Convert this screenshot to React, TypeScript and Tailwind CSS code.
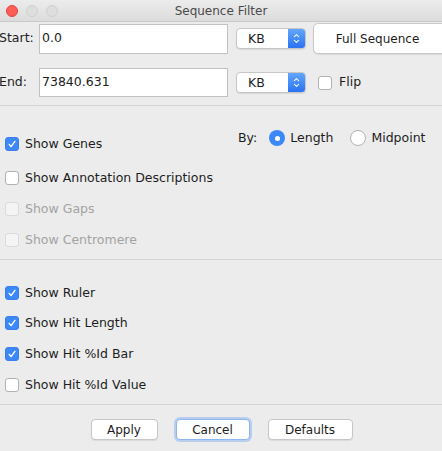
import clsx from "clsx";

function Check({ checked, disabled }: { checked?: boolean; disabled?: boolean }) {
  if (checked)
    return (
      <span className="flex h-[14px] w-[14px] shrink-0 items-center justify-center rounded-[3px] border border-[#3a7ff0] bg-[#3d88f8]">
        <svg viewBox="0 0 10 10" className="h-[10px] w-[10px]">
          <path d="M2.2 5.4 L4.1 7.6 L7.9 2.4" fill="none" stroke="white" strokeWidth="1.4" strokeLinecap="round" strokeLinejoin="round" />
        </svg>
      </span>
    );
  return (
    <span
      className={clsx(
        "h-[14px] w-[14px] shrink-0 rounded-[3px] border",
        disabled ? "border-[#dadada] bg-[#f4f4f4]" : "border-[#b2b2b2] bg-white"
      )}
    />
  );
}

function Row({ label, checked, disabled }: { label: string; checked?: boolean; disabled?: boolean }) {
  return (
    <div className="flex items-center gap-[6px] pl-[5px]">
      <Check checked={checked} disabled={disabled} />
      <span className={disabled ? "text-[#a3a3a3]" : "text-[#1d1d1d]"}>{label}</span>
    </div>
  );
}

function Radio({ on }: { on?: boolean }) {
  if (on)
    return (
      <span className="flex h-[16px] w-[16px] shrink-0 items-center justify-center rounded-full bg-[#3d88f8]">
        <span className="h-[5px] w-[5px] rounded-full bg-white" />
      </span>
    );
  return <span className="block h-[16px] w-[16px] shrink-0 rounded-full border border-[#b2b2b2] bg-white" />;
}

function UnitSelect() {
  return (
    <div className="flex h-[21px] w-[70px] shrink-0 overflow-hidden rounded-[4px] border border-[#c6c6c6] bg-white shadow-[0_1px_1px_rgba(0,0,0,0.08)]">
      <span className="flex-1 pl-[11px] leading-[19px]">KB</span>
      <span className="flex w-[17px] items-center justify-center bg-gradient-to-b from-[#62a6fb] to-[#2a72f1]">
        <svg viewBox="0 0 8 14" className="h-[13px] w-[7px]">
          <path d="M1.5 5 L4 2.5 L6.5 5 M1.5 9 L4 11.5 L6.5 9" fill="none" stroke="white" strokeWidth="1.2" strokeLinecap="round" strokeLinejoin="round" />
        </svg>
      </span>
    </div>
  );
}

function Light({ color }: { color: string }) {
  return <span className={clsx("h-[12px] w-[12px] rounded-full border", color)} />;
}

export default function App() {
  return (
    <div
      className="h-[451px] w-[442px] overflow-hidden bg-[#ececec] text-[12.5px] text-[#1d1d1d]"
      style={{ fontFamily: '"DejaVu Sans", sans-serif' }}
    >
      {/* title bar */}
      <div className="relative flex h-[22px] items-center border-b border-[#c9c9c9] bg-gradient-to-b from-[#ececec] to-[#dcdcdc]">
        <div className="flex gap-[8px] pl-[6px]">
          <Light color="border-[#e0443e] bg-[#fd5f57]" />
          <Light color="border-[#cfcfcf] bg-[#dedede]" />
          <Light color="border-[#cfcfcf] bg-[#dedede]" />
        </div>
        <span className="absolute left-0 right-0 text-center text-[12px] text-[#4a4a4a]">Sequence Filter</span>
      </div>

      {/* range */}
      <div className="border-b border-[#d4d4d4] pb-[8px]">
        <div className="mt-[1px] flex h-[31px] items-center">
          <span className="ml-[-1px] w-[40px] shrink-0">Start:</span>
          <div className="flex h-[30px] w-[189px] shrink-0 items-center border border-[#c2c2c2] bg-white pl-[2px]">0.0</div>
          <div className="ml-[8px] shrink-0">
            <UnitSelect />
          </div>
          <div className="ml-[7px] flex h-[31px] w-[134px] shrink-0 items-center justify-center rounded-[5px] border border-[#c9c9c9] bg-white pr-[5px] text-[12px] shadow-[0_1px_1px_rgba(0,0,0,0.08)]">
            Full Sequence
          </div>
        </div>
        <div className="mt-[14px] flex h-[29px] items-center">
          <span className="ml-[-1px] w-[40px] shrink-0">End:</span>
          <div className="flex h-[29px] w-[189px] shrink-0 items-center border border-[#c2c2c2] bg-white pl-[2px]">73840.631</div>
          <div className="ml-[8px] shrink-0">
            <UnitSelect />
          </div>
          <div className="ml-[12px] flex items-center gap-[7px]">
            <Check />
            <span>Flip</span>
          </div>
        </div>
      </div>

      {/* display options */}
      <div className="flex flex-col border-b border-[#d4d4d4] pb-[4px] pt-[22px]">
        <div className="flex h-[30px] items-start">
          <div className="w-[238px] shrink-0 pt-[7px]">
            <Row label="Show Genes" checked />
          </div>
          <div className="flex items-center pt-[1px]">
            <span>By:</span>
            <span className="ml-[12px]">
              <Radio on />
            </span>
            <span className="ml-[5px]">Length</span>
            <span className="ml-[17px]">
              <Radio />
            </span>
            <span className="ml-[5px]">Midpoint</span>
          </div>
        </div>
        <div className="mt-[5px] flex h-[30px] items-center">
          <Row label="Show Annotation Descriptions" />
        </div>
        <div className="mt-[1px] flex h-[30px] items-center">
          <Row label="Show Gaps" disabled />
        </div>
        <div className="mt-[1px] flex h-[30px] items-center">
          <Row label="Show Centromere" disabled />
        </div>
      </div>

      {/* hit options */}
      <div className="flex flex-col border-b border-[#d4d4d4] pb-[4px] pt-[18px]">
        <div className="flex h-[30px] items-center">
          <Row label="Show Ruler" checked />
        </div>
        <div className="flex h-[30px] items-center">
          <Row label="Show Hit Length" checked />
        </div>
        <div className="mt-[1px] flex h-[30px] items-center">
          <Row label="Show Hit %Id Bar" checked />
        </div>
        <div className="mt-[1px] flex h-[30px] items-center">
          <Row label="Show Hit %Id Value" />
        </div>
      </div>

      {/* buttons */}
      <div className="mt-[14px] flex justify-center gap-[18px] pl-[1px] text-[12px]">
        <div className="flex h-[21px] w-[67px] items-center justify-center rounded-[4px] border border-[#c6c6c6] bg-white shadow-[0_1px_1px_rgba(0,0,0,0.08)]">
          Apply
        </div>
        <div className="flex h-[21px] w-[74px] items-center justify-center rounded-[4px] border border-[#8db6f3] bg-white shadow-[0_0_0_2px_rgba(120,170,245,0.45)]">
          Cancel
        </div>
        <div className="flex h-[21px] w-[85px] items-center justify-center rounded-[4px] border border-[#c6c6c6] bg-white shadow-[0_1px_1px_rgba(0,0,0,0.08)]">
          Defaults
        </div>
      </div>
    </div>
  );
}
